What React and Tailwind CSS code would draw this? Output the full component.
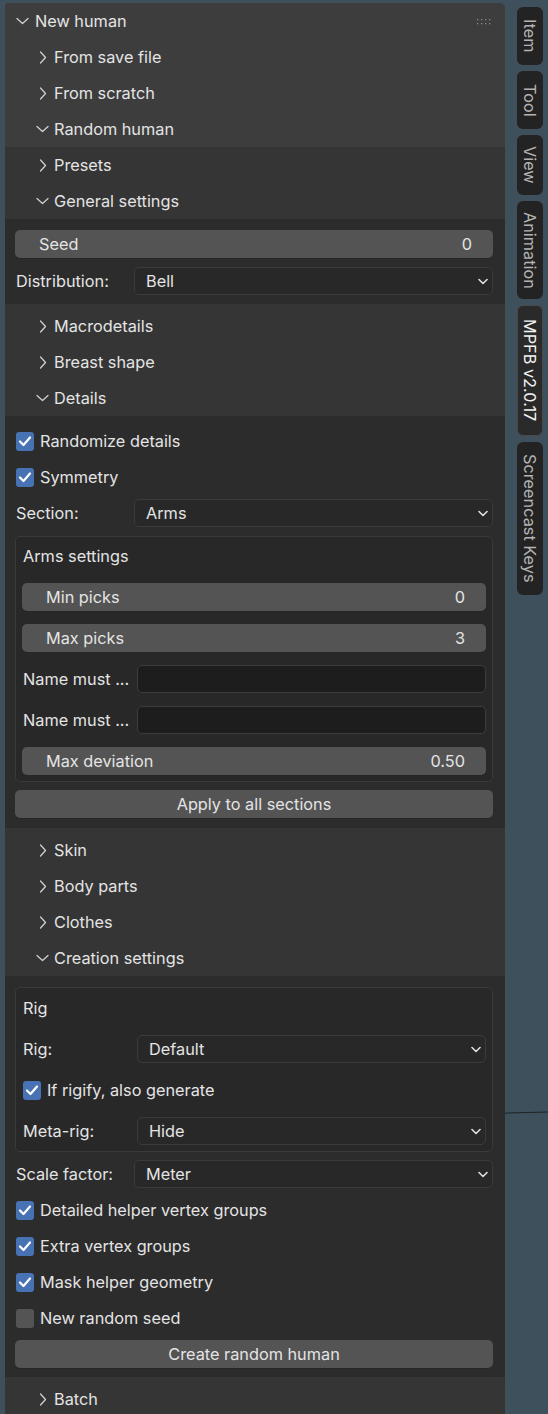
import { Fragment } from "react";

const ChevronDown = ({ w = 13, h = 8 }) => (
  <svg width={w} height={h} viewBox="0 0 13 8" fill="none">
    <path d="M1 1.5 L6.5 6.5 L12 1.5" stroke="#cfcfcf" strokeWidth="1.3" strokeLinecap="round" strokeLinejoin="round" />
  </svg>
);

const ChevronRight = () => (
  <svg width="8" height="13" viewBox="0 0 8 13" fill="none">
    <path d="M1.5 1 L6.5 6.5 L1.5 12" stroke="#cfcfcf" strokeWidth="1.3" strokeLinecap="round" strokeLinejoin="round" />
  </svg>
);

const SmallChevron = () => (
  <svg width="10" height="7" viewBox="0 0 10 7" fill="none">
    <path d="M1 1.5 L5 5.5 L9 1.5" stroke="#e0e0e0" strokeWidth="1.6" strokeLinecap="round" strokeLinejoin="round" />
  </svg>
);

const Check = () => (
  <svg width="14" height="12" viewBox="0 0 14 12" fill="none">
    <path d="M2 6.5 L5.5 10 L12 2.5" stroke="#ffffff" strokeWidth="2.2" strokeLinecap="round" strokeLinejoin="round" />
  </svg>
);

// one collapsible sub-panel header row
const SubHeader = ({ label, open }) => (
  <div className="h-[36px] shrink-0 flex items-center pl-[31px]">
    <div className="w-[13px] flex justify-center">{open ? <ChevronDown /> : <ChevronRight />}</div>
    <span className="ml-[5px]">{label}</span>
  </div>
);

const Slider = ({ label, value }) => (
  <div className="h-[28px] shrink-0 rounded-[5px] bg-[#545454] flex items-center justify-between pl-[24px] pr-[21px] shadow-[0_1px_0_#262626]">
    <span>{label}</span>
    <span>{value}</span>
  </div>
);

const Dropdown = ({ value }) => (
  <div className="flex-1 h-[28px] rounded-[5px] bg-[#282828] border border-[#3b3b3b] flex items-center justify-between pl-[11px] pr-[4px]">
    <span>{value}</span>
    <SmallChevron />
  </div>
);

const Field = ({ label, children, labelW = "w-[119px]" }) => (
  <div className="flex items-center h-[28px] shrink-0">
    <div className={`${labelW} pl-[1px] shrink-0 whitespace-nowrap`}>{label}</div>
    {children}
  </div>
);

const CheckRow = ({ label, checked = true }) => (
  <div className="h-[36px] shrink-0 flex items-center pl-[1px]">
    <div className={`w-[18px] h-[19px] rounded-[3px] flex items-center justify-center ${checked ? "bg-[#4772b3]" : "bg-[#545454]"}`}>
      {checked && <Check />}
    </div>
    <span className="ml-[6px]">{label}</span>
  </div>
);

const Button = ({ label }) => (
  <div className="h-[28px] rounded-[5px] bg-[#545454] flex items-center justify-center shadow-[0_1px_0_#262626]">
    {label}
  </div>
);

const tabs = [
  { label: "Item", h: "h-[58px]" },
  { label: "Tool", h: "h-[58px]" },
  { label: "View", h: "h-[60px]" },
  { label: "Animation", h: "h-[98px]" },
  { label: "MPFB v2.0.17", h: "h-[131px]", active: true },
  { label: "Screencast Keys", h: "h-[153px]" },
];

const App = () => {
  return (
    <div className="relative w-[548px] h-[1414px] overflow-hidden bg-[#3f505d] flex items-start font-['Inter','Noto_Sans',sans-serif] text-[16.3px] text-[#e4e4e4] leading-none">
      {/* viewport edge line */}
      <div className="absolute left-[505px] top-[1112px] w-[50px] h-[1px] bg-[#1e2428] -rotate-[1.5deg]" />

      {/* panel */}
      <div className="ml-[5px] mt-[3px] w-[500px] shrink-0 bg-[#3d3d3d] rounded-tr-[5px] rounded-tl-[3px] flex flex-col">
        <div className="h-[36px] shrink-0 flex items-center pl-[11px] relative">
          <div className="w-[13px] flex justify-center"><ChevronDown /></div>
          <span className="ml-[6px]">New human</span>
          <svg className="absolute right-[13px] top-[15px]" width="16" height="7" viewBox="0 0 16 7">
            {[0, 4, 8, 12].map((x) => (
              <Fragment key={x}>
                <rect x={x + 1} y="1" width="1.3" height="1.3" fill="#8a8a8a" />
                <rect x={x + 1} y="5" width="1.3" height="1.3" fill="#8a8a8a" />
              </Fragment>
            ))}
          </svg>
        </div>
        <SubHeader label="From save file" />
        <SubHeader label="From scratch" />
        <SubHeader label="Random human" open />

        {/* random human content */}
        <div className="bg-[#353535] flex flex-col">
          <SubHeader label="Presets" />
          <SubHeader label="General settings" open />
          <div className="bg-[#2c2c2c] pl-[10px] pr-[12px] pt-[11px] pb-[9px] flex flex-col gap-[9px]">
            <Slider label="Seed" value="0" />
            <Field label="Distribution:">
              <Dropdown value="Bell" />
            </Field>
          </div>

          <div className="h-[4px] shrink-0" />
          <SubHeader label="Macrodetails" />
          <SubHeader label="Breast shape" />
          <SubHeader label="Details" open />
          <div className="bg-[#2c2c2c] pl-[10px] pr-[12px] pt-[7px] pb-[10px] flex flex-col">
            <CheckRow label="Randomize details" />
            <CheckRow label="Symmetry" />
            <div className="mt-[4px]">
              <Field label="Section:">
                <Dropdown value="Arms" />
              </Field>
            </div>
            <div className="mt-[9px] rounded-[5px] bg-[#282828] border border-[#3a3a3a] pl-[6px] pr-[6px] pt-[5px] pb-[6px] flex flex-col gap-[13px]">
              <div className="h-[28px] flex items-center pl-[1px]">Arms settings</div>
              <Slider label="Min picks" value="0" />
              <Slider label="Max picks" value="3" />
              <Field label="Name must ..." labelW="w-[115px]">
                <div className="flex-1 h-[28px] rounded-[5px] bg-[#1d1d1d] border border-[#3c3c3c]" />
              </Field>
              <Field label="Name must ..." labelW="w-[115px]">
                <div className="flex-1 h-[28px] rounded-[5px] bg-[#1d1d1d] border border-[#3c3c3c]" />
              </Field>
              <Slider label="Max deviation" value="0.50" />
            </div>
            <div className="mt-[8px]">
              <Button label="Apply to all sections" />
            </div>
          </div>

          <div className="h-[4px] shrink-0" />
          <SubHeader label="Skin" />
          <SubHeader label="Body parts" />
          <SubHeader label="Clothes" />
          <SubHeader label="Creation settings" open />
          <div className="bg-[#2c2c2c] pl-[10px] pr-[12px] pt-[11px] pb-[9px] flex flex-col">
            <div className="rounded-[5px] bg-[#282828] border border-[#3a3a3a] pl-[6px] pr-[6px] pt-[6px] pb-[6px] flex flex-col gap-[13px]">
              <div className="h-[28px] flex items-center pl-[1px]">Rig</div>
              <Field label="Rig:" labelW="w-[115px]">
                <Dropdown value="Default" />
              </Field>
              <div className="h-[28px] flex items-center pl-[1px]">
                <div className="w-[18px] h-[19px] rounded-[3px] bg-[#4772b3] flex items-center justify-center">
                  <Check />
                </div>
                <span className="ml-[6px]">If rigify, also generate</span>
              </div>
              <Field label="Meta-rig:" labelW="w-[115px]">
                <Dropdown value="Hide" />
              </Field>
            </div>
            <div className="mt-[8px]">
              <Field label="Scale factor:">
                <Dropdown value="Meter" />
              </Field>
            </div>
            <div className="mt-[4px]">
              <CheckRow label="Detailed helper vertex groups" />
              <CheckRow label="Extra vertex groups" />
              <CheckRow label="Mask helper geometry" />
              <CheckRow label="New random seed" checked={false} />
            </div>
            <div className="mt-[4px]">
              <Button label="Create random human" />
            </div>
          </div>
          <div className="h-[4px] shrink-0" />
          <SubHeader label="Batch" />
          <div className="h-[20px] shrink-0" />
        </div>
      </div>

      {/* sidebar tabs */}
      <div className="ml-[12px] mt-[7px] w-[26px] shrink-0 flex flex-col gap-[6px]">
        {tabs.map((t) => (
          <div
            key={t.label}
            className={`${t.h} rounded-[6px] flex items-center justify-center [writing-mode:vertical-rl] whitespace-nowrap ${
              t.active ? "bg-[#2a2a2a] text-[#f2f2f2] border border-[#4a4a4a]" : "bg-[#232323] text-[#b3b3b3]"
            }`}
          >
            {t.label}
          </div>
        ))}
      </div>
    </div>
  );
};

export default App;
